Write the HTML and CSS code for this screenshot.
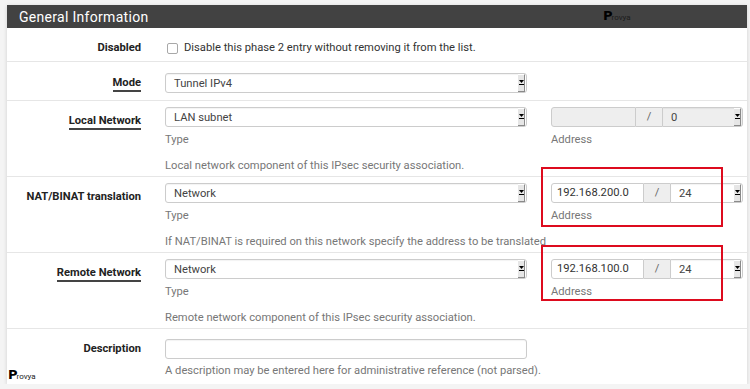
FILE: index.html
```
<!DOCTYPE HTML>
<html>

<head>
    <title>IPsec Phase 2</title>
    <meta name="viewport" content="width=device-width, initial-scale=1">
    <link rel="stylesheet" href="styles.css">
</head>

<body>
    <div class="panel">
        <div class="panel-heading">
            <h2>General Information</h2>
            <span class="brand brand-top"><b>P</b>rovya</span>
        </div>
        <div class="panel-body">
            <div class="row row-check">
                <div class="label">Disabled</div>
                <div class="field">
                    <label class="check"><span class="box"></span>Disable this phase 2 entry without removing it from the list.</label>
                </div>
            </div>
            <div class="row row-mode">
                <div class="label"><span class="req">Mode</span></div>
                <div class="field">
                    <div class="select"><span class="value">Tunnel IPv4</span><span class="arrow"><svg width="5" height="6" viewBox="0 0 5 6"><polygon points="0,0 5,0 2.5,3" fill="#000"/><rect x="0" y="4" width="5" height="1" fill="#000"/></svg></span></div>
                </div>
            </div>
            <div class="row row-net">
                <div class="label pushed"><span class="req">Local Network</span></div>
                <div class="field">
                    <div class="select"><span class="value">LAN subnet</span><span class="arrow"><svg width="5" height="6" viewBox="0 0 5 6"><polygon points="0,0 5,0 2.5,3" fill="#000"/><rect x="0" y="4" width="5" height="1" fill="#000"/></svg></span></div>
                    <div class="sub">Type</div>
                    <div class="help">Local network component of this IPsec security association.</div>
                </div>
                <div class="field">
                    <div class="addr disabled">
                        <span class="addr-input"></span>
                        <span class="addon">/</span>
                        <div class="select mask"><span class="value">0</span><span class="arrow"><svg width="5" height="6" viewBox="0 0 5 6"><polygon points="0,0 5,0 2.5,3" fill="#000"/><rect x="0" y="4" width="5" height="1" fill="#000"/></svg></span></div>
                    </div>
                    <div class="sub">Address</div>
                </div>
            </div>
            <div class="row row-net">
                <div class="label pushed">NAT/BINAT translation</div>
                <div class="field">
                    <div class="select"><span class="value">Network</span><span class="arrow"><svg width="5" height="6" viewBox="0 0 5 6"><polygon points="0,0 5,0 2.5,3" fill="#000"/><rect x="0" y="4" width="5" height="1" fill="#000"/></svg></span></div>
                    <div class="sub">Type</div>
                    <div class="help nowrap">If NAT/BINAT is required on this network specify the address to be translated</div>
                </div>
                <div class="field">
                    <div class="addr">
                        <span class="addr-input wide">192.168.200.0</span>
                        <span class="addon">/</span>
                        <div class="select mask"><span class="value">24</span><span class="arrow"><svg width="5" height="6" viewBox="0 0 5 6"><polygon points="0,0 5,0 2.5,3" fill="#000"/><rect x="0" y="4" width="5" height="1" fill="#000"/></svg></span></div>
                    </div>
                    <div class="sub">Address</div>
                </div>
            </div>
            <div class="row row-net">
                <div class="label pushed"><span class="req">Remote Network</span></div>
                <div class="field">
                    <div class="select"><span class="value">Network</span><span class="arrow"><svg width="5" height="6" viewBox="0 0 5 6"><polygon points="0,0 5,0 2.5,3" fill="#000"/><rect x="0" y="4" width="5" height="1" fill="#000"/></svg></span></div>
                    <div class="sub">Type</div>
                    <div class="help">Remote network component of this IPsec security association.</div>
                </div>
                <div class="field">
                    <div class="addr">
                        <span class="addr-input wide">192.168.100.0</span>
                        <span class="addon">/</span>
                        <div class="select mask"><span class="value">24</span><span class="arrow"><svg width="5" height="6" viewBox="0 0 5 6"><polygon points="0,0 5,0 2.5,3" fill="#000"/><rect x="0" y="4" width="5" height="1" fill="#000"/></svg></span></div>
                    </div>
                    <div class="sub">Address</div>
                </div>
            </div>
            <div class="row row-desc">
                <div class="label">Description</div>
                <div class="field">
                    <div class="input"></div>
                    <div class="help nowrap">A description may be entered here for administrative reference (not parsed).</div>
                </div>
            </div>
        </div>
        <span class="brand brand-bottom"><b>P</b>rovya</span>
        <div class="mark mark-nat"></div>
        <div class="mark mark-remote"></div>
    </div>
</body>

</html>
```

FILE: styles.css
```
html {
    font-family: Roboto, "Noto Sans", sans-serif;
    font-size: 11.2px;
    color: #333;
}

body {
    margin: 0;
    background-color: #f4f4f4;
}

.panel {
    position: relative;
    width: 740px;
    margin: 5px 0 0 7px;
    background-color: #fff;
    box-shadow: 0 1px 4px rgba(0, 0, 0, .15);
}

.panel-heading {
    height: 23px;
    background-color: #424242;
    padding-left: 12px;
}

.panel-heading h2 {
    margin: 0;
    font-size: 14px;
    font-weight: 400;
    line-height: 24px;
    letter-spacing: .3px;
    color: #fff;
}

.row {
    display: grid;
    grid-template-columns: 134px 362px 192px;
    column-gap: 24px;
    border-bottom: 1px solid #e6e6e6;
}

.row-check {
    padding: 10px 0 3px;
}

.row-mode {
    padding: 11px 0 7px;
}

.row-net {
    padding: 6px 0 1px;
}

.row-desc {
    padding: 10px 0 4px;
    border-bottom: none;
}

.label {
    text-align: right;
    font-weight: 700;
    line-height: 20px;
    color: #222;
}

.label.pushed {
    padding-top: 4px;
}

.req {
    border-bottom: 2px solid #444;
    padding-bottom: 1px;
}

.check {
    display: flex;
    align-items: center;
    line-height: 20px;
    color: #333;
}

.box {
    width: 9px;
    height: 9px;
    border: 1px solid #a8a8a8;
    border-radius: 2px;
    margin: 0 6px 0 2px;
}

.select,
.input {
    display: flex;
    align-items: center;
    height: 18px;
    border: 1px solid #ccc;
    border-radius: 3px;
    background-color: #fff;
    box-shadow: inset 0 1px 1px rgba(0, 0, 0, .05);
}

.value {
    flex: 1;
    padding-left: 8px;
    color: #444;
}

.arrow {
    display: flex;
    align-items: center;
    justify-content: center;
    width: 6px;
    height: 16px;
    margin-right: 1px;
    background-color: #e6e6e6;
    border-right: 1px solid #8a8a8a;
    border-bottom: 1px solid #8a8a8a;
    border-top: 1px solid #fff;
}

.sub {
    margin-top: 4px;
    line-height: 18px;
    color: #777;
}

.help {
    margin-top: 8px;
    line-height: 18px;
    color: #777;
}

.row-desc .help {
    margin-top: 3px;
}

.nowrap {
    white-space: nowrap;
}

.addr {
    display: flex;
    height: 20px;
}

.addr-input {
    width: 78px;
    padding-left: 5px;
    border: 1px solid #ccc;
    border-radius: 3px 0 0 3px;
    line-height: 18px;
    color: #333;
}

.addr-input.wide {
    width: 86px;
}

.addon {
    width: 26px;
    border-top: 1px solid #ccc;
    border-bottom: 1px solid #ccc;
    background-color: #eee;
    text-align: center;
    line-height: 18px;
    color: #666;
}

.select.mask {
    flex: 1;
    border-radius: 0 3px 3px 0;
}

.disabled .addr-input,
.disabled .select {
    background-color: #eee;
}

.brand {
    position: absolute;
    font-size: 8px;
    line-height: 12px;
    color: #222;
}

.brand b {
    font-size: 13px;
    font-weight: 900;
    font-family: "DejaVu Sans", sans-serif;
    color: #000;
    letter-spacing: -1px;
}

.brand-top {
    left: 596px;
    top: 5px;
    color: #1c1c1c;
}

.brand-bottom {
    left: 1px;
    top: 364px;
}

.mark {
    position: absolute;
    left: 534px;
    width: 178px;
    border: 2px solid #dd0b1e;
}

.mark-nat {
    top: 162px;
    height: 56px;
}

.mark-remote {
    top: 240px;
    height: 52px;
}
```
